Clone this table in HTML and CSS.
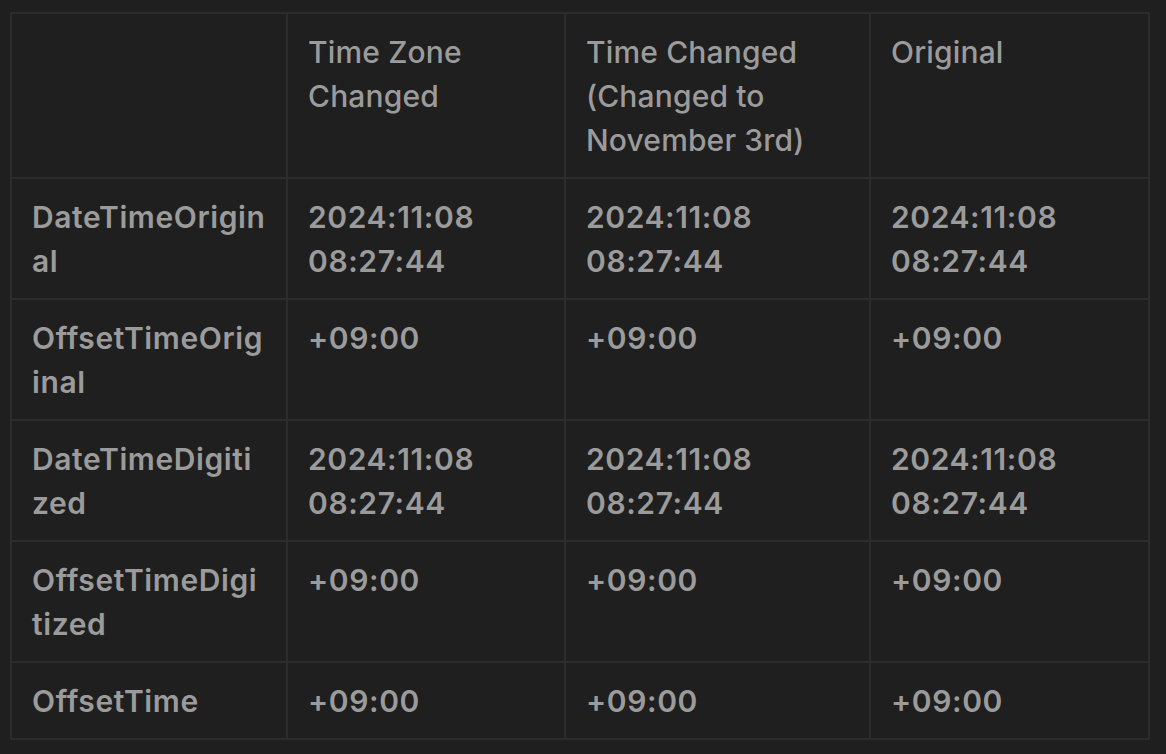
FILE: index.html
```html
<!DOCTYPE html>
<html lang="en">
<head>
<meta charset="utf-8">
<title>EXIF table</title>
<link rel="stylesheet" href="styles.css">
</head>
<body>
<table class="exif">
  <thead>
    <tr>
      <th class="c1"></th>
      <th class="c2">Time Zone Changed</th>
      <th class="c3">Time Changed (Changed to November 3rd)</th>
      <th class="c4">Original</th>
    </tr>
  </thead>
  <tbody>
    <tr>
      <td>DateTimeOrigin<wbr>al</td>
      <td>2024:11:08 08:27:44</td>
      <td>2024:11:08 08:27:44</td>
      <td>2024:11:08 08:27:44</td>
    </tr>
    <tr>
      <td>OffsetTimeOrig<wbr>inal</td>
      <td>+09:00</td>
      <td>+09:00</td>
      <td>+09:00</td>
    </tr>
    <tr>
      <td>DateTimeDigiti<wbr>zed</td>
      <td>2024:11:08 08:27:44</td>
      <td>2024:11:08 08:27:44</td>
      <td>2024:11:08 08:27:44</td>
    </tr>
    <tr>
      <td>OffsetTimeDigi<wbr>tized</td>
      <td>+09:00</td>
      <td>+09:00</td>
      <td>+09:00</td>
    </tr>
    <tr>
      <td>OffsetTime</td>
      <td>+09:00</td>
      <td>+09:00</td>
      <td>+09:00</td>
    </tr>
  </tbody>
</table>
</body>
</html>
```
FILE: styles.css
```css
html, body {
  background: #1f1f1f;
}
body {
  margin: 12px 0 0 10px;
  font-family: Inter, "Noto Sans", sans-serif;
  color: #9b9b9b;
}
.exif {
  width: 1140px;
  table-layout: fixed;
  border-collapse: separate;
  border-spacing: 0;
  border-top: 2px solid #2c2c2c;
  border-left: 2px solid #2c2c2c;
}
.exif th,
.exif td {
  box-sizing: border-box;
  border-right: 2px solid #2c2c2c;
  border-bottom: 2px solid #2c2c2c;
  padding: 16px 20px 15px 20px;
  font-size: 30px;
  line-height: 44px;
  text-align: left;
  vertical-align: top;
  white-space: normal;
}
.exif th {
  font-weight: 500;
  letter-spacing: 0.15px;
}
.exif td {
  font-weight: 600;
  letter-spacing: 0.6px;
}
.c1 { width: 276px; }
.c2 { width: 278px; }
.c3 { width: 305px; }
.c4 { width: 279px; }
```
